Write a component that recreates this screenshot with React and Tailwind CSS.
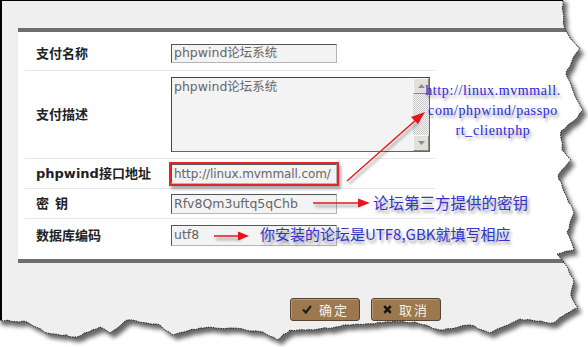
import React from "react";

const KEY = [
  [-3, -3], [563, -3], [563, 12], [564, 26], [570, 38], [580, 48], [573, 58], [566, 74],
  [572, 88], [577, 100], [583, 110], [575, 120], [561, 131], [562, 150], [571, 160],
  [558, 175], [566, 195], [574, 213], [567, 232], [574, 250], [557, 254], [568, 268],
  [574, 282], [571, 296], [578, 308], [563, 316], [553, 323], [520, 319], [505, 326],
  [490, 333], [470, 325], [440, 330], [415, 322], [390, 322], [347, 325], [313, 330],
  [290, 330], [277, 340], [263, 332], [233, 328], [200, 328], [173, 335], [160, 325],
  [127, 320], [110, 333], [100, 327], [77, 337], [47, 333], [27, 322], [0, 320], [-3, 320],
];

function buildPath() {
  let seed = 12345;
  const rnd = () => {
    seed = (seed * 16807) % 2147483647;
    return seed / 2147483647;
  };
  const out = [];
  for (let k = 0; k < KEY.length - 1; k++) {
    const [ax, ay] = KEY[k];
    const [bx, by] = KEY[k + 1];
    const d = Math.hypot(bx - ax, by - ay);
    const jitter = k === 0 || k >= KEY.length - 2 ? 0 : 1.6;
    const n = Math.max(1, Math.round(d / 4));
    for (let i = 0; i < n; i++) {
      const t = i / n;
      const j = i === 0 ? 0 : jitter;
      out.push([
        ax + (bx - ax) * t + (rnd() - 0.5) * j,
        ay + (by - ay) * t + (rnd() - 0.5) * j,
      ]);
    }
  }
  out.push(KEY[KEY.length - 1]);
  return "M" + out.map((p) => p[0].toFixed(1) + "," + p[1].toFixed(1)).join(" L") + " Z";
}

const PAGE = buildPath();
const OUTER = "M-10,-10 H600 V360 H-10 Z " + PAGE;

function Input({ value, className = "", small = false }) {
  return (
    <div
      className={
        "h-[19px] w-[166px] bg-[#f3f3f3] border border-[#b5b5b5] border-t-[#555] border-l-[#555] pl-[2px] flex items-center leading-none text-[#666] font-['DejaVu_Sans','Noto_Sans_CJK_SC',sans-serif] whitespace-nowrap overflow-hidden " +
        (small ? "text-[12px] tracking-[-0.1px] " : "text-[12.5px] ") +
        className
      }
    >
      {value}
    </div>
  );
}

function Label({ children }) {
  return (
    <div className="w-[146px] pl-[11px] text-[13px] font-bold text-[#222] font-['DejaVu_Sans','Noto_Sans_CJK_SC',sans-serif] whitespace-nowrap">
      {children}
    </div>
  );
}

function Button({ icon, text }) {
  return (
    <div className="w-[70px] h-[23px] rounded-[3px] border border-[#5a4330] bg-[#9c784f] shadow-[inset_1px_1px_0_#b99770] flex items-center pl-[11px] gap-[7px]">
      {icon}
      <span className="text-[13px] tracking-[2px] text-[#f6f0e6] font-['Noto_Sans_CJK_SC',sans-serif] leading-none">
        {text}
      </span>
    </div>
  );
}

export default function App() {
  return (
    <div className="relative w-[588px] h-[347px] bg-white overflow-hidden">
      <div className="w-full h-full border-l-2 border-t border-black bg-[#efefef] pt-[27px] pl-[16px]">
        <div className="w-[560px] bg-white border-t-4 border-b-4 border-[#6e6e6e] pl-[7px]">
          <div className="w-[410px]">
            <div className="h-[39px] pt-[5px] flex items-center border-b border-[#e6e6e6]">
              <Label>支付名称</Label>
              <Input value="phpwind论坛系统" />
            </div>
            <div className="h-[88px] flex items-center border-b border-[#e6e6e6]">
              <Label>支付描述</Label>
              <div className="relative w-[259px] h-[75px] bg-[#f3f3f3] border border-[#666] border-t-[#444] border-l-[#444]">
                <div className="pl-[2px] pt-[1px] text-[12.5px] text-[#666] font-['DejaVu_Sans','Noto_Sans_CJK_SC',sans-serif] leading-[16px]">
                  phpwind论坛系统
                </div>
                <div className="absolute right-0 top-0 bottom-0 w-[16px] flex flex-col bg-[repeating-conic-gradient(#c9c9c9_0%_25%,#f5f5f5_0%_50%)] bg-[length:2px_2px]">
                  <div className="h-[16px] bg-[#e2e0da] border border-[#f8f8f8] border-r-[#888] border-b-[#888] flex items-center justify-center">
                    <svg width="7" height="4" viewBox="0 0 7 4"><path d="M0 4 L3.5 0 L7 4 Z" fill="#8a8a8a" /></svg>
                  </div>
                  <div className="flex-1" />
                  <div className="h-[16px] bg-[#e2e0da] border border-[#f8f8f8] border-r-[#888] border-b-[#888] flex items-center justify-center">
                    <svg width="7" height="4" viewBox="0 0 7 4"><path d="M0 0 L3.5 4 L7 0 Z" fill="#8a8a8a" /></svg>
                  </div>
                </div>
              </div>
            </div>
            <div className="h-[30px] flex items-center border-b border-[#e6e6e6]">
              <Label>phpwind接口地址</Label>
              <div className="-ml-[2px] border-2 border-[#e3262b] shadow-[2px_3px_3px_rgba(0,0,0,0.35)]">
                <Input value="http://linux.mvmmall.com/" className="h-[20px]" small />
              </div>
            </div>
            <div className="h-[30px] pt-[1px] flex items-center border-b border-[#e6e6e6]">
              <Label>
                密<span className="inline-block w-[6px]" />钥
              </Label>
              <Input value="Rfv8Qm3uftq5qChb" className="h-[20px]" />
            </div>
            <div className="h-[40px] pt-[6px]">
              <div className="h-[21px] flex items-center">
                <Label>数据库编码</Label>
                <Input value="utf8" className="h-[21px]" />
              </div>
            </div>
          </div>
        </div>
        <div className="flex pl-[272px] pt-[35px] gap-[11px]">
          <Button
            text="确定"
            icon={
              <svg width="10" height="9" viewBox="0 0 10 9">
                <path d="M1 4.5 L3.8 7.5 L9 1" stroke="#1d1d1d" strokeWidth="2.2" fill="none" />
              </svg>
            }
          />
          <Button
            text="取消"
            icon={
              <svg width="9" height="9" viewBox="0 0 9 9">
                <path d="M1.2 1.2 L7.8 7.8 M7.8 1.2 L1.2 7.8" stroke="#111" strokeWidth="2.4" />
              </svg>
            }
          />
        </div>
      </div>

      <svg className="absolute inset-0 pointer-events-none" width="588" height="347" viewBox="0 0 588 347">
        <defs>
          <filter id="blur" x="-10%" y="-10%" width="120%" height="120%">
            <feGaussianBlur stdDeviation="2" />
          </filter>
          <filter id="ashadow" x="-20%" y="-50%" width="140%" height="200%">
            <feGaussianBlur stdDeviation="1.5" />
          </filter>
          <clipPath id="outside">
            <path d={OUTER} clipRule="evenodd" />
          </clipPath>
        </defs>
        <path d={OUTER} fill="#fff" fillRule="evenodd" />
        <g clipPath="url(#outside)">
          <path d={PAGE} transform="translate(4 5)" fill="rgba(0,0,0,0.6)" filter="url(#blur)" />
        </g>
        <path d={PAGE} fill="none" stroke="#111" strokeWidth="0.9" strokeDasharray="1.5 1" />

        <g filter="url(#ashadow)" opacity="0.45" transform="translate(2 3)">
          <path d="M347 181 L418 118" stroke="#000" strokeWidth="1.5" />
          <path d="M313 203 L360 203" stroke="#000" strokeWidth="1.5" />
          <path d="M214 236 L240 236" stroke="#000" strokeWidth="1.5" />
        </g>
        <path d="M347 181 L417 119" stroke="#e3161c" strokeWidth="1.4" />
        <path d="M425 112 L411 117 L418 124 Z" fill="#e3161c" />
        <path d="M313 203 L360 203" stroke="#e3161c" strokeWidth="1.5" />
        <path d="M370 203 L358 198.5 L358 207.5 Z" fill="#e3161c" />
        <path d="M214 236 L240 236" stroke="#e3161c" strokeWidth="1.5" />
        <path d="M249 236 L238 231.5 L238 240.5 Z" fill="#e3161c" />
      </svg>

      <div className="absolute left-[424px] top-[81px] w-[138px] text-center text-[14px] leading-[20px] tracking-[0.6px] text-[#2a2ad6] font-['Liberation_Serif',serif] [text-shadow:2px_3px_3px_rgba(0,0,0,0.4)]">
        <div>http://linux.mvmmall.</div>
        <div>com/phpwind/passpo</div>
        <div>rt_clientphp</div>
      </div>
      <div className="absolute left-[373px] top-[192px] text-[15.5px] leading-[20px] text-[#3333cc] font-['Noto_Sans_CJK_SC',sans-serif] whitespace-nowrap [text-shadow:2px_3px_3px_rgba(0,0,0,0.4)]">
        论坛第三方提供的密钥
      </div>
      <div className="absolute left-[260px] top-[224px] text-[15px] leading-[20px] text-[#3333cc] font-['Noto_Sans_CJK_SC',sans-serif] whitespace-nowrap [text-shadow:2px_3px_3px_rgba(0,0,0,0.4)]">
        你安装的论坛是UTF8,GBK就填写相应
      </div>
    </div>
  );
}
